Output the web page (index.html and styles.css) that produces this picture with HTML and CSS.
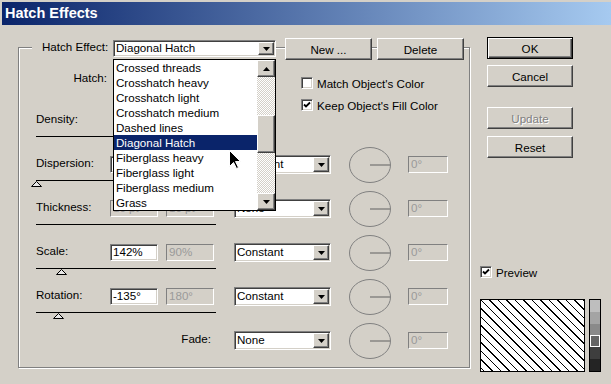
FILE: index.html
```html
<!DOCTYPE html>
<html>
<head>
<meta charset="utf-8">
<link rel="stylesheet" href="styles.css">
</head>
<body>
<div class="window">
  <div class="titlebar">Hatch Effects</div>
  <div class="main">
    <div class="group">
      <div class="group-head">
        <span class="legend-label">Hatch Effect:</span>
        <div class="combo combo-effect">
          <span class="combo-text">Diagonal Hatch</span>
          <span class="combo-btn raised"><svg width="7" height="4" viewBox="0 0 7 4"><path d="M0 0h7L3.5 4z"/></svg></span>
          <div class="droplist">
            <div class="items">
              <div class="item">Crossed threads</div>
              <div class="item">Crosshatch heavy</div>
              <div class="item">Crosshatch light</div>
              <div class="item">Crosshatch medium</div>
              <div class="item">Dashed lines</div>
              <div class="item sel">Diagonal Hatch</div>
              <div class="item">Fiberglass heavy</div>
              <div class="item">Fiberglass light</div>
              <div class="item">Fiberglass medium</div>
              <div class="item">Grass</div>
            </div>
            <div class="scrollbar">
              <div class="sb-btn raised"><svg width="7" height="4" viewBox="0 0 7 4"><path d="M0 4h7L3.5 0z"/></svg></div>
              <div class="sb-track sb-track1"></div>
              <div class="sb-thumb raised"></div>
              <div class="sb-track sb-track2"></div>
              <div class="sb-btn raised"><svg width="7" height="4" viewBox="0 0 7 4"><path d="M0 0h7L3.5 4z"/></svg></div>
            </div>
            <svg class="cursor" width="13" height="20" viewBox="0 0 13 20"><path d="M0.5 0.5V16.5L4.5 12.5L7.5 18.5L9.5 17.5L6.5 11.5H11.5Z" fill="#000" stroke="#fff"/></svg>
          </div>
        </div>
        <button class="btn btn-new raised">New ...</button>
        <button class="btn btn-delete raised">Delete</button>
      </div>

      <div class="top-area">
        <div class="hatch-field">
          <span class="hatch-lbl">Hatch:</span>
          <div class="combo combo-hatch">
            <span class="combo-text"></span>
            <span class="combo-btn raised"><svg width="7" height="4" viewBox="0 0 7 4"><path d="M0 0h7L3.5 4z"/></svg></span>
          </div>
        </div>
        <div class="checks">
          <div class="check"><span class="box"></span>Match Object's Color</div>
          <div class="check"><span class="box"><svg width="8" height="8" viewBox="0 0 8 8"><path d="M1 3.5l2 2 4-4" fill="none" stroke="#000" stroke-width="1.8"/></svg></span>Keep Object's Fill Color</div>
        </div>
      </div>

      <div class="prow">
        <div class="ctl">
          <span class="lbl">Density:</span>
        </div>
        <div class="slider"><svg class="thumb" style="margin-left:110px" width="11" height="6" viewBox="0 0 11 6"><path d="M5.5 0.5L10.5 5.5H0.5Z"/></svg></div>
      </div>

      <div class="prow">
        <div class="ctl">
          <span class="lbl">Dispersion:</span>
          <span class="fld"></span>
          <span class="fld dis f2"></span>
          <div class="combo dd"><span class="combo-text">Constant</span><span class="combo-btn raised"><svg width="7" height="4" viewBox="0 0 7 4"><path d="M0 0h7L3.5 4z"/></svg></span></div>
          <svg class="dial" width="42" height="36" viewBox="0 0 42 36"><ellipse cx="21" cy="18" rx="20.5" ry="17.5"/><path d="M21 18H41"/></svg>
          <span class="fld dis ang">0°</span>
        </div>
        <div class="slider"><svg class="thumb" style="margin-left:-5px" width="11" height="6" viewBox="0 0 11 6"><path d="M5.5 0.5L10.5 5.5H0.5Z"/></svg></div>
      </div>

      <div class="prow">
        <div class="ctl">
          <span class="lbl">Thickness:</span>
          <span class="fld dis">10 pt</span>
          <span class="fld dis f2">10 pt</span>
          <div class="combo dd"><span class="combo-text">None</span><span class="combo-btn raised"><svg width="7" height="4" viewBox="0 0 7 4"><path d="M0 0h7L3.5 4z"/></svg></span></div>
          <svg class="dial" width="42" height="36" viewBox="0 0 42 36"><ellipse cx="21" cy="18" rx="20.5" ry="17.5"/><path d="M21 18H41"/></svg>
          <span class="fld dis ang">0°</span>
        </div>
        <div class="slider"></div>
      </div>

      <div class="prow">
        <div class="ctl">
          <span class="lbl">Scale:</span>
          <span class="fld">142%</span>
          <span class="fld dis f2">90%</span>
          <div class="combo dd"><span class="combo-text">Constant</span><span class="combo-btn raised"><svg width="7" height="4" viewBox="0 0 7 4"><path d="M0 0h7L3.5 4z"/></svg></span></div>
          <svg class="dial" width="42" height="36" viewBox="0 0 42 36"><ellipse cx="21" cy="18" rx="20.5" ry="17.5"/><path d="M21 18H41"/></svg>
          <span class="fld dis ang">0°</span>
        </div>
        <div class="slider"><svg class="thumb" style="margin-left:20px" width="11" height="6" viewBox="0 0 11 6"><path d="M5.5 0.5L10.5 5.5H0.5Z"/></svg></div>
      </div>

      <div class="prow">
        <div class="ctl">
          <span class="lbl">Rotation:</span>
          <span class="fld">-135°</span>
          <span class="fld dis f2">180°</span>
          <div class="combo dd"><span class="combo-text">Constant</span><span class="combo-btn raised"><svg width="7" height="4" viewBox="0 0 7 4"><path d="M0 0h7L3.5 4z"/></svg></span></div>
          <svg class="dial" width="42" height="36" viewBox="0 0 42 36"><ellipse cx="21" cy="18" rx="20.5" ry="17.5"/><path d="M21 18H41"/></svg>
          <span class="fld dis ang">0°</span>
        </div>
        <div class="slider"><svg class="thumb" style="margin-left:17px" width="11" height="6" viewBox="0 0 11 6"><path d="M5.5 0.5L10.5 5.5H0.5Z"/></svg></div>
      </div>

      <div class="prow">
        <div class="ctl">
          <span class="lbl fade-lbl">Fade:</span>
          <div class="combo dd"><span class="combo-text">None</span><span class="combo-btn raised"><svg width="7" height="4" viewBox="0 0 7 4"><path d="M0 0h7L3.5 4z"/></svg></span></div>
          <svg class="dial" width="42" height="36" viewBox="0 0 42 36"><ellipse cx="21" cy="18" rx="20.5" ry="17.5"/><path d="M21 18H41"/></svg>
          <span class="fld dis ang">0°</span>
        </div>
      </div>
    </div>

    <div class="side">
      <button class="btn sbtn btn-default">OK</button>
      <button class="btn sbtn raised btn-cancel">Cancel</button>
      <button class="btn sbtn raised btn-update disabled">Update</button>
      <button class="btn sbtn raised btn-reset">Reset</button>
      <div class="check preview-check"><span class="box"><svg width="8" height="8" viewBox="0 0 8 8"><path d="M1 3.5l2 2 4-4" fill="none" stroke="#000" stroke-width="1.8"/></svg></span>Preview</div>
      <div class="preview-row">
        <div class="pv">
          <svg width="103" height="71" viewBox="0 0 103 71" shape-rendering="crispEdges"><path d="M-68 0l71 71M-59.5 0l71 71M-51 0l71 71M-42.5 0l71 71M-34 0l71 71M-25.5 0l71 71M-17 0l71 71M-8.5 0l71 71M0 0l71 71M8.5 0l71 71M17 0l71 71M25.5 0l71 71M34 0l71 71M42.5 0l71 71M51 0l71 71M59.5 0l71 71M68 0l71 71M76.5 0l71 71M85 0l71 71M93.5 0l71 71M102 0l71 71" stroke="#000" stroke-width="1" fill="none"/></svg>
        </div>
        <div class="gray">
          <span class="g g1"></span>
          <span class="g g2"></span>
          <span class="g g3"></span>
          <span class="g g4"></span>
          <span class="g g5"></span>
          <span class="g g6"></span>
        </div>
      </div>
    </div>
  </div>
</div>
</body>
</html>
```
FILE: styles.css
```css
* { box-sizing: border-box; }
html, body { margin: 0; padding: 0; }
body {
  width: 611px;
  height: 384px;
  overflow: hidden;
  background: #d4d0c8;
  font-family: "Liberation Sans", Arial, sans-serif;
  font-size: 11.6px;
  color: #000;
}
.window { height: 384px; background: #d4d0c8; }
.titlebar {
  margin: 2px 0 0 2px;
  height: 23px;
  padding-left: 3px;
  background: linear-gradient(to right, #0a246a, #a6caf0);
  color: #fff;
  font-weight: bold;
  font-size: 14.5px;
  line-height: 23px;
}
.main { display: flex; align-items: flex-start; }

.raised {
  background: #d4d0c8;
  border: 1px solid;
  border-color: #fff #404040 #404040 #fff;
  box-shadow: inset -1px -1px 0 #808080;
}

/* group box */
.group {
  margin: 22px 0 0 18px;
  width: 452px;
  height: 321px;
  border: 1px solid #808080;
  box-shadow: 1px 1px 0 #fff, inset 1px 1px 0 #fff;
}
.group-head {
  display: flex;
  align-items: flex-start;
  height: 22px;
  margin-top: -10px;
  padding-left: 13px;
}
.legend-label {
  width: 81px;
  height: 22px;
  padding-left: 10px;
  line-height: 18px;
  background: #d4d0c8;
  white-space: nowrap;
}
.combo {
  position: relative;
  display: flex;
  width: 163px;
  height: 17px;
  background: #fff;
  border: 1px solid;
  border-color: #808080 #fff #fff #808080;
  box-shadow: inset 1px 1px 0 #404040, inset -1px -1px 0 #d4d0c8;
}
.combo-effect { margin-top: 2px; }
.combo-text {
  flex: 1;
  padding-left: 2px;
  line-height: 14px;
  white-space: nowrap;
  overflow: hidden;
}
.combo-btn {
  width: 16px;
  margin: 1px;
  display: flex;
  align-items: center;
  justify-content: center;
}
.combo-btn svg, .sb-btn svg { display: block; }

.droplist {
  position: absolute;
  left: -1px;
  top: 18px;
  width: 163px;
  height: 152px;
  background: #fff;
  border: 1px solid #000;
  display: flex;
  z-index: 5;
}
.items { flex: 1; }
.item {
  height: 15px;
  line-height: 15px;
  padding-left: 2px;
  white-space: nowrap;
}
.item.sel { background: #0a246a; color: #fff; }
.scrollbar {
  width: 18px;
  display: flex;
  flex-direction: column;
}
.sb-btn {
  height: 17px;
  display: flex;
  align-items: center;
  justify-content: center;
}
.sb-track {
  background-color: #fff;
  background-image: repeating-conic-gradient(#d4d0c8 0 25%, #fff 0 50%);
  background-size: 2px 2px;
}
.sb-track1 { height: 38px; }
.sb-track2 { height: 40px; }
.sb-thumb { height: 38px; }
.cursor { position: absolute; left: 115px; top: 90px; }

.btn {
  font-family: inherit;
  font-size: inherit;
  font-weight: normal;
  color: #000;
  padding: 0;
  width: 87px;
  height: 22px;
  text-align: center;
}
.btn-new { margin-left: 9px; }
.btn-delete { margin-left: 5px; }

/* top area */
.top-area { display: flex; height: 51px; }
.hatch-field { display: flex; align-items: flex-start; padding-top: 10px; }
.hatch-lbl {
  width: 88px;
  text-align: right;
  margin-right: 6px;
  line-height: 14px;
  padding-top: 1px;
}
.checks {
  margin-left: 25px;
  padding-top: 17px;
  display: flex;
  flex-direction: column;
  gap: 10px;
}
.check {
  display: flex;
  align-items: center;
  height: 12px;
  white-space: nowrap;
}
.box {
  width: 12px;
  height: 12px;
  margin-right: 4px;
  background: #fff;
  border: 1px solid;
  border-color: #808080 #fff #fff #808080;
  box-shadow: inset 1px 1px 0 #404040, inset -1px -1px 0 #d4d0c8;
  display: flex;
  align-items: center;
  justify-content: center;
}
.box svg { display: block; }

/* parameter rows */
.prow { height: 44px; }
.ctl {
  display: flex;
  align-items: center;
  height: 19px;
  padding-left: 17px;
}
.lbl { width: 74px; white-space: nowrap; line-height: 14px; margin-top: -3px; }
.fade-lbl { width: 178px; text-align: right; padding-right: 3px; }
.fld {
  width: 48px;
  height: 17px;
  padding-left: 2px;
  line-height: 13px;
  background: #fff;
  border: 1px solid;
  border-color: #808080 #fff #fff #808080;
  box-shadow: inset 1px 1px 0 #404040, inset -1px -1px 0 #d4d0c8;
  white-space: nowrap;
  overflow: hidden;
}
.fld.dis { background: #d4d0c8; color: #9a9a9a; box-shadow: none; }
.f2 { margin-left: 8px; }
.ang { width: 40px; margin-left: 17px; }
.dd { width: 97px; height: 19px; margin-left: 20px; }
.dd .combo-text { line-height: 16px; }
.dial { margin-left: 18px; flex: none; }
.dial ellipse { fill: none; stroke: #808080; stroke-width: 1; }
.dial path { stroke: #606060; stroke-width: 1; }
.slider {
  width: 180px;
  height: 7px;
  margin: 6px 0 0 17px;
  border-top: 1px solid #000;
}
.thumb { display: block; }
.thumb path { fill: #e8e8e8; stroke: #000; stroke-width: 1; }

/* side column */
.side {
  margin: 12px 0 0 10px;
  display: flex;
  flex-direction: column;
  align-items: flex-start;
}
.sbtn { width: 86px; margin-left: 7px; }
.btn-default {
  background: #d4d0c8;
  border: 1px solid #000;
  box-shadow: inset 1px 1px 0 #fff, inset -1px -1px 0 #404040, inset -2px -2px 0 #808080;
}
.btn-cancel { margin-top: 6px; }
.btn-update { margin-top: 20px; }
.btn-reset { margin-top: 7px; }
.disabled { color: #808080; text-shadow: 1px 1px 0 #fff; }
.preview-check { margin-top: 108px; }
.preview-row { display: flex; margin-top: 21px; gap: 4px; }
.pv {
  width: 105px;
  height: 73px;
  background: #fff;
  border: 1px solid #000;
}
.pv svg { display: block; }
.gray {
  width: 12px;
  height: 73px;
  border: 1px solid #000;
  display: flex;
  flex-direction: column;
}
.g { flex: 1; }
.g1 { background: #bebebe; }
.g2 { background: #a4a4a4; }
.g3 { background: #8a8a8a; }
.g4 { background: #656565; box-shadow: inset 0 0 0 1px #fff; }
.g5 { background: #3e3e3e; }
.g6 { background: #242424; }
```
